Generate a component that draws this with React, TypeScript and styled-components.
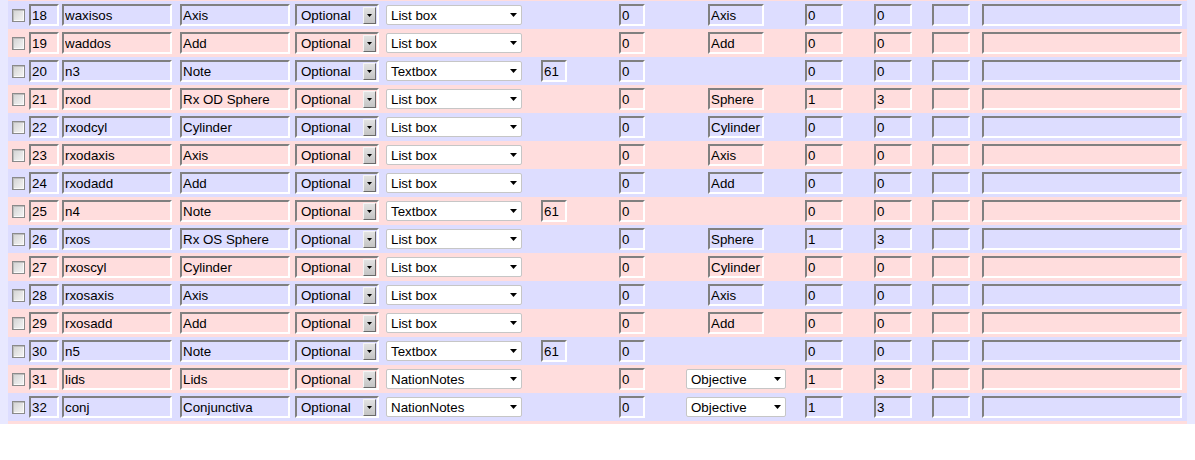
import React from "react";
import styled, { createGlobalStyle } from "styled-components";

const GlobalStyle = createGlobalStyle`
  body {
    margin: 0;
    background: #ffffff;
    font-family: "Liberation Sans", Arial, sans-serif;
  }
`;

const Viewport = styled.div`
  height: 424px;
  overflow: hidden;
  background: #e8e8ff;
  padding: 0 8px;
`;

// the list is scrolled: only the last pixel of row 17 shows at the top
const Table = styled.div`
  margin-top: -27px;
  display: flex;
  flex-direction: column;
`;

const Row = styled.div<{ $odd: boolean }>`
  display: grid;
  grid-template-columns: 17px 33px 118px 115px 91px 155px 78px 67px 119px 69px 58px 50px 1fr;
  align-items: center;
  height: 28px;
  padding-left: 4px;
  background: ${(p) => (p.$odd ? "#ffdddd" : "#ddddff")};
  font-size: 13.333px;
  color: #000;
`;

const Check = styled.span`
  display: block;
  width: 13px;
  height: 13px;
  box-sizing: border-box;
  border: 1px solid #8a8a8a;
  background: linear-gradient(135deg, #d2d2d2 0%, #e8e8e8 60%, #f4f4f4 100%);
  box-shadow: inset 1px 1px 0 #bdbdbd, inset -1px -1px 0 #fafafa;
`;

const Field = styled.input<{ $w: number }>`
  width: ${(p) => p.$w}px;
  height: 22px;
  box-sizing: border-box;
  margin: 0;
  padding: 0 1px;
  border-style: solid;
  border-width: 2px;
  border-color: #808080 #ffffff #ffffff #808080;
  background: transparent;
  font: inherit;
  color: #000;
  outline: none;
`;

const ClassicSelect = styled.div`
  width: 84px;
  height: 22px;
  box-sizing: border-box;
  display: flex;
  align-items: center;
  justify-content: space-between;
  border-style: solid;
  border-width: 2px;
  border-color: #808080 #ffffff #ffffff #808080;
  padding-left: 4px;
`;

const DropButton = styled.span`
  width: 13px;
  height: 17px;
  box-sizing: border-box;
  display: flex;
  align-items: center;
  justify-content: center;
  margin-right: 1px;
  background: linear-gradient(#e2e2e2, #c4c4c4);
  border: 1px solid;
  border-color: #f4f4f4 #6a6a6a #6a6a6a #f4f4f4;
`;

const SelectBox = styled.div<{ $w: number }>`
  width: ${(p) => p.$w}px;
  height: 20px;
  box-sizing: border-box;
  display: flex;
  align-items: center;
  justify-content: space-between;
  padding: 0 4px 0 4px;
  background: #ffffff;
  border: 1px solid #c6c6c6;
  border-radius: 2px;
`;

const Centered = styled.div`
  width: 100px;
  display: flex;
  justify-content: center;
`;

const Arrow = ({ w, h }: { w: number; h: number }) => (
  <svg width={w} height={h} viewBox={`0 0 ${w} ${h}`}>
    <polygon points={`0,0 ${w},0 ${w / 2},${h}`} fill="#000" />
  </svg>
);

type RowData = {
  seq: number;
  id: string;
  title: string;
  type: string;
  size?: string;
  list?: string;
  objective?: boolean;
  c1: string;
  c2: string;
  clipped?: boolean;
};

const rows: RowData[] = [
  { seq: 17, id: "", title: "", type: "", c1: "", c2: "", clipped: true },
  { seq: 18, id: "waxisos", title: "Axis", type: "List box", list: "Axis", c1: "0", c2: "0" },
  { seq: 19, id: "waddos", title: "Add", type: "List box", list: "Add", c1: "0", c2: "0" },
  { seq: 20, id: "n3", title: "Note", type: "Textbox", size: "61", c1: "0", c2: "0" },
  { seq: 21, id: "rxod", title: "Rx OD Sphere", type: "List box", list: "Sphere", c1: "1", c2: "3" },
  { seq: 22, id: "rxodcyl", title: "Cylinder", type: "List box", list: "Cylinder", c1: "0", c2: "0" },
  { seq: 23, id: "rxodaxis", title: "Axis", type: "List box", list: "Axis", c1: "0", c2: "0" },
  { seq: 24, id: "rxodadd", title: "Add", type: "List box", list: "Add", c1: "0", c2: "0" },
  { seq: 25, id: "n4", title: "Note", type: "Textbox", size: "61", c1: "0", c2: "0" },
  { seq: 26, id: "rxos", title: "Rx OS Sphere", type: "List box", list: "Sphere", c1: "1", c2: "3" },
  { seq: 27, id: "rxoscyl", title: "Cylinder", type: "List box", list: "Cylinder", c1: "0", c2: "0" },
  { seq: 28, id: "rxosaxis", title: "Axis", type: "List box", list: "Axis", c1: "0", c2: "0" },
  { seq: 29, id: "rxosadd", title: "Add", type: "List box", list: "Add", c1: "0", c2: "0" },
  { seq: 30, id: "n5", title: "Note", type: "Textbox", size: "61", c1: "0", c2: "0" },
  { seq: 31, id: "lids", title: "Lids", type: "NationNotes", objective: true, c1: "1", c2: "3" },
  { seq: 32, id: "conj", title: "Conjunctiva", type: "NationNotes", objective: true, c1: "1", c2: "3" },
  { seq: 33, id: "", title: "", type: "", c1: "", c2: "", clipped: true },
];

const LayoutRow = ({ r }: { r: RowData }) => (
  <Row $odd={r.seq % 2 === 1}>
    <Check />
    <Field $w={30} readOnly value={r.clipped ? "" : String(r.seq)} />
    <Field $w={110} readOnly value={r.id} />
    <Field $w={110} readOnly value={r.title} />
    <ClassicSelect>
      <span>{r.clipped ? "" : "Optional"}</span>
      <DropButton>
        <Arrow w={5} h={3} />
      </DropButton>
    </ClassicSelect>
    <SelectBox $w={136}>
      <span>{r.type}</span>
      <Arrow w={7} h={4} />
    </SelectBox>
    <div>{r.size && <Field $w={26} readOnly value={r.size} />}</div>
    <Field $w={26} readOnly value={r.clipped ? "" : "0"} />
    <Centered>
      {r.objective ? (
        <SelectBox $w={100}>
          <span>Objective</span>
          <Arrow w={7} h={4} />
        </SelectBox>
      ) : (
        r.list && <Field $w={56} readOnly value={r.list} />
      )}
    </Centered>
    <Field $w={38} readOnly value={r.c1} />
    <Field $w={38} readOnly value={r.c2} />
    <Field $w={38} readOnly value="" />
    <Field $w={200} readOnly value="" />
  </Row>
);

export default function App() {
  return (
    <>
      <GlobalStyle />
      <Viewport>
        <Table>
          {rows.map((r) => (
            <LayoutRow key={r.seq} r={r} />
          ))}
        </Table>
      </Viewport>
    </>
  );
}
